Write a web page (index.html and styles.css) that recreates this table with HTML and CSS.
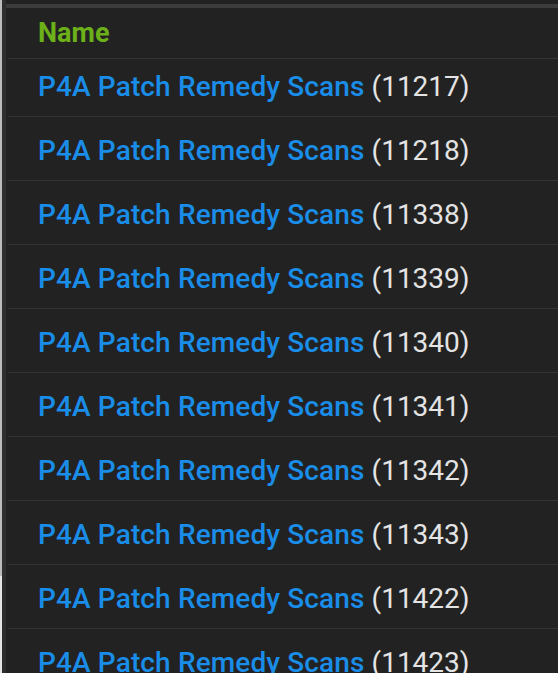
FILE: index.html
```html
<!DOCTYPE html>
<html>
<head>
<meta charset="utf-8">
<link rel="stylesheet" href="styles.css">
</head>
<body>
<div class="edge"><div class="edge-top"></div><div class="edge-bottom"></div></div>
<div class="gutter"></div>
<main class="panel">
  <div class="topbar"></div>
  <div class="table">
    <div class="head">Name</div>
    <div class="row first"><a class="link">P4A Patch Remedy Scans</a> <span class="num">(11217)</span></div>
    <div class="row"><a class="link">P4A Patch Remedy Scans</a> <span class="num">(11218)</span></div>
    <div class="row"><a class="link">P4A Patch Remedy Scans</a> <span class="num">(11338)</span></div>
    <div class="row"><a class="link">P4A Patch Remedy Scans</a> <span class="num">(11339)</span></div>
    <div class="row"><a class="link">P4A Patch Remedy Scans</a> <span class="num">(11340)</span></div>
    <div class="row"><a class="link">P4A Patch Remedy Scans</a> <span class="num">(11341)</span></div>
    <div class="row"><a class="link">P4A Patch Remedy Scans</a> <span class="num">(11342)</span></div>
    <div class="row"><a class="link">P4A Patch Remedy Scans</a> <span class="num">(11343)</span></div>
    <div class="row"><a class="link">P4A Patch Remedy Scans</a> <span class="num">(11422)</span></div>
    <div class="row"><a class="link">P4A Patch Remedy Scans</a> <span class="num">(11423)</span></div>
  </div>
</main>
</body>
</html>
```
FILE: styles.css
```css
html, body {
  margin: 0;
  padding: 0;
  height: 673px;
  overflow: hidden;
  background: #222222;
}
body {
  display: flex;
  font-family: Roboto, "Liberation Sans", sans-serif;
}
.edge {
  width: 2px;
  display: flex;
  flex-direction: column;
}
.edge-top {
  height: 576px;
  background: #bdbdbd;
}
.edge-bottom {
  flex: 1;
  background: #e6e6e6;
}
.gutter {
  width: 4px;
  background: #2e2e2e;
}
.panel {
  flex: 1;
  background: #222222;
  padding-top: 4px;
  min-width: 0;
}
.topbar {
  height: 4px;
  background: #3c3c3c;
}
.table {
  margin-left: 2px;
}
.head {
  box-sizing: border-box;
  height: 51px;
  border-bottom: 1px solid #333333;
  display: flex;
  align-items: center;
  padding-left: 30px;
  padding-bottom: 1px;
  color: #6cb01a;
  font-weight: 700;
  font-size: 27px;
}
.row {
  height: 64px;
  box-sizing: border-box;
  border-bottom: 1px solid #333333;
  display: flex;
  align-items: center;
  padding-left: 30px;
  padding-top: 4px;
  font-size: 28px;
  white-space: nowrap;
}
.row.first {
  height: 58px;
  padding-top: 0;
  padding-bottom: 2px;
}
.link {
  color: #1a8de8;
  font-weight: 500;
  letter-spacing: 0.13px;
}
.num {
  color: #e4e4e4;
  margin-left: 7px;
}
```
